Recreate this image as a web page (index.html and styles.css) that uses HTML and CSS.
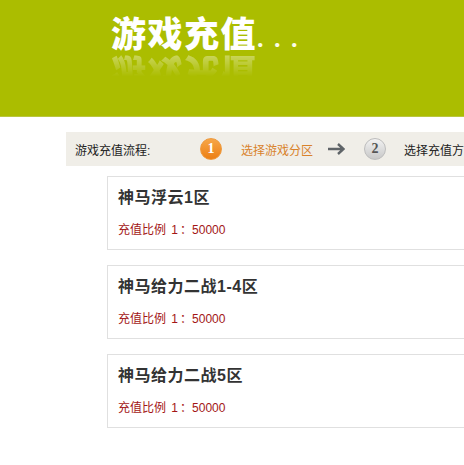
FILE: index.html
```html
<!DOCTYPE html>
<html lang="zh-CN">

<head>
    <meta charset="UTF-8" />
    <title>游戏充值</title>
    <link rel="stylesheet" href="styles.css">
</head>

<body>
    <div class="banner">
        <div class="banner-title">
            <h1>游戏充值</h1>
            <span class="reflect">游戏充值</span>
            <span class="dots">. . .</span>
        </div>
    </div>

    <div class="flow">
        <span class="flow-label">游戏充值流程:</span>
        <span class="step step-on">1</span>
        <span class="flow-now">选择游戏分区</span>
        <svg class="arrow" width="17" height="12" viewBox="0 0 17 12">
            <path d="M0 6H15M10 1L15.5 6L10 11" fill="none" stroke="#5f6468" stroke-width="2.4" />
        </svg>
        <span class="step">2</span>
        <span class="flow-next">选择充值方</span>
    </div>

    <div class="list">
        <div class="card">
            <h2>神马浮云1区</h2>
            <p>充值比例 1<span class="colon">：</span>50000</p>
        </div>
        <div class="card">
            <h2>神马给力二战1-4区</h2>
            <p>充值比例 1<span class="colon">：</span>50000</p>
        </div>
        <div class="card">
            <h2>神马给力二战5区</h2>
            <p>充值比例 1<span class="colon">：</span>50000</p>
        </div>
    </div>
</body>

</html>
```

FILE: styles.css
```css
* {
    font-family: "Liberation Sans", "Noto Sans CJK SC", sans-serif;
}

html,
body {
    margin: 0;
    padding: 0;
    overflow: hidden;
}

body {
    width: 464px;
    height: 465px;
    background: #fff;
}

/* 顶部绿色横幅 */

.banner {
    height: 117px;
    padding: 17px 0 0 111px;
    box-sizing: border-box;
    background: #abbd00;
    border-bottom: 1px solid #b9c640;
}

.banner-title {
    position: relative;
    display: flex;
    align-items: baseline;
}

.banner-title h1 {
    margin: 0;
    font-size: 35px;
    line-height: 36px;
    font-weight: 900;
    letter-spacing: 1.5px;
    color: #fff;
}

.reflect {
    position: absolute;
    left: 0;
    top: 36px;
    font-size: 35px;
    line-height: 36px;
    font-weight: 900;
    letter-spacing: 1.5px;
    color: #fff;
    transform: scaleY(-1);
    opacity: 0.4;
    filter: blur(0.6px);
    -webkit-mask-image: linear-gradient(to top, #000, transparent 65%);
    mask-image: linear-gradient(to top, #000, transparent 65%);
}

.dots {
    font-family: "Liberation Serif", serif;
    font-size: 26px;
    font-weight: 700;
    letter-spacing: 2px;
    color: #fbfce8;
}

/* 流程条 */

.flow {
    display: flex;
    align-items: center;
    height: 34px;
    width: 398px;
    margin: 15px 0 0 66px;
    background: #f0eee8;
    font-size: 12px;
    color: #222;
    white-space: nowrap;
}

.flow-label {
    flex: none;
    width: 125px;
    margin-left: 9px;
}

.step {
    flex: none;
    width: 20px;
    height: 20px;
    border-radius: 50%;
    margin-right: 19px;
    text-align: center;
    line-height: 20px;
    font-family: "Liberation Serif", serif;
    font-weight: 700;
    font-size: 14px;
    color: #555;
    background: linear-gradient(#f2f2f2, #c8c8c8);
    border: 1px solid #bdbdbd;
}

.step-on {
    color: #fff;
    background: linear-gradient(#f6a648, #ec7f14);
    border-color: #ee9a3e;
}

.flow-now {
    flex: none;
    color: #d9822b;
}

.arrow {
    flex: none;
    margin: 0 19px 0 15px;
}

.flow-next {
    flex: none;
    margin-left: -1px;
}

/* 分区列表 */

.list {
    display: flex;
    flex-direction: column;
    gap: 15px;
    margin: 10px 0 0 107px;
    width: 357px;
    overflow: hidden;
}

.card {
    flex: none;
    width: 420px;
    height: 74px;
    box-sizing: border-box;
    padding: 9px 10px 0;
    border: 1px solid #e0e0e0;
}

.card h2 {
    margin: 0;
    font-size: 16px;
    line-height: 24px;
    font-weight: 700;
    letter-spacing: 0.5px;
    color: #333;
}

.card p {
    margin: 11px 0 0;
    font-size: 12px;
    line-height: 16px;
    color: #a31616;
    word-spacing: 2px;
}

.colon {
    font-family: "Noto Sans CJK TC", sans-serif;
    margin-left: 2px;
}
```
